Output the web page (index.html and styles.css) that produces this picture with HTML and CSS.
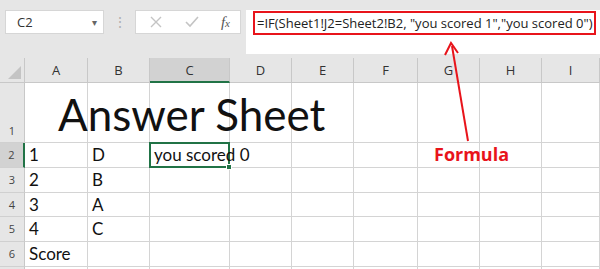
FILE: index.html
```html
<!DOCTYPE html>
<html lang="en">
<head>
  <meta charset="UTF-8" />
  <title>Answer Sheet</title>
  <link rel="stylesheet" href="styles.css">
</head>
<body>

<div class="app">
  <div class="toolbar">
    <div class="namebox">
      <span>C2</span>
      <span class="caret">&#9662;</span>
    </div>
    <div class="grip">&#8942;</div>
    <div class="buttons">
      <svg width="14" height="14" viewBox="0 0 14 14"><path d="M2 2 L12 12 M12 2 L2 12" stroke="#c4c4c4" stroke-width="1.4" fill="none"/></svg>
      <svg width="16" height="14" viewBox="0 0 16 14"><path d="M2 7 L6 11 L14 2" stroke="#c4c4c4" stroke-width="1.6" fill="none"/></svg>
      <span class="fx"><i>f</i><i class="x">x</i></span>
    </div>
    <div class="formulabar">
      <div class="formula">=IF(Sheet1!J2=Sheet2!B2, "you scored 1","you scored 0")</div>
    </div>
  </div>

  <div class="sheet">
    <div class="corner"><span class="tri"></span></div>
    <div class="colhead">A</div>
    <div class="colhead">B</div>
    <div class="colhead active">C</div>
    <div class="colhead">D</div>
    <div class="colhead">E</div>
    <div class="colhead">F</div>
    <div class="colhead">G</div>
    <div class="colhead">H</div>
    <div class="colhead">I</div>

    <div class="rowhead tall">1</div>
    <div class="cell tall title">Answer Sheet</div>
    <div class="cell tall"></div>
    <div class="cell tall"></div>
    <div class="cell tall"></div>
    <div class="cell tall"></div>
    <div class="cell tall"></div>
    <div class="cell tall"></div>
    <div class="cell tall"></div>
    <div class="cell tall"></div>

    <div class="rowhead active">2</div>
    <div class="cell">1</div>
    <div class="cell">D</div>
    <div class="cell selected"><span class="spill">you scored 0</span><span class="handle"></span></div>
    <div class="cell"></div>
    <div class="cell"></div>
    <div class="cell"></div>
    <div class="cell"></div>
    <div class="cell"></div>
    <div class="cell"></div>

    <div class="rowhead">3</div>
    <div class="cell">2</div>
    <div class="cell">B</div>
    <div class="cell"></div>
    <div class="cell"></div>
    <div class="cell"></div>
    <div class="cell"></div>
    <div class="cell"></div>
    <div class="cell"></div>
    <div class="cell"></div>

    <div class="rowhead">4</div>
    <div class="cell">3</div>
    <div class="cell">A</div>
    <div class="cell"></div>
    <div class="cell"></div>
    <div class="cell"></div>
    <div class="cell"></div>
    <div class="cell"></div>
    <div class="cell"></div>
    <div class="cell"></div>

    <div class="rowhead">5</div>
    <div class="cell">4</div>
    <div class="cell">C</div>
    <div class="cell"></div>
    <div class="cell"></div>
    <div class="cell"></div>
    <div class="cell"></div>
    <div class="cell"></div>
    <div class="cell"></div>
    <div class="cell"></div>

    <div class="rowhead">6</div>
    <div class="cell">Score</div>
    <div class="cell"></div>
    <div class="cell"></div>
    <div class="cell"></div>
    <div class="cell"></div>
    <div class="cell"></div>
    <div class="cell"></div>
    <div class="cell"></div>
    <div class="cell"></div>

    <div class="rowhead"></div>
    <div class="cell"></div>
    <div class="cell"></div>
    <div class="cell"></div>
    <div class="cell"></div>
    <div class="cell"></div>
    <div class="cell"></div>
    <div class="cell"></div>
    <div class="cell"></div>
    <div class="cell"></div>
  </div>

  <svg class="arrow" width="600" height="269" viewBox="0 0 600 269">
    <line x1="468" y1="141" x2="452" y2="46" stroke="#e8141b" stroke-width="2"/>
    <path d="M445 55 L451 43 L458 53" stroke="#e8141b" stroke-width="2" fill="none"/>
  </svg>
  <div class="note">Formula</div>
</div>

</body>
</html>
```

FILE: styles.css
```css
* { box-sizing: border-box; }

body {
  margin: 0;
  font-family: Lato, "Open Sans", sans-serif;
  background: #fff;
  overflow: hidden;
}

.app {
  position: relative;
  width: 600px;
  height: 269px;
  overflow: hidden;
}

.toolbar {
  display: flex;
  align-items: flex-start;
  background: #e6e6e6;
  height: 58px;
  padding-top: 10px;
}

.namebox {
  display: flex;
  align-items: center;
  justify-content: space-between;
  width: 99px;
  height: 24px;
  margin-left: 5px;
  padding: 0 6px 0 11px;
  background: #fff;
  border: 1px solid #d6d6d6;
  font-family: "Open Sans", sans-serif;
  font-size: 13px;
  color: #333;
}

.caret {
  font-size: 10px;
  color: #666;
}

.grip {
  width: 31px;
  text-align: center;
  color: #b0b0b0;
  font-size: 14px;
  line-height: 24px;
}

.buttons {
  display: flex;
  align-items: center;
  justify-content: space-between;
  width: 106px;
  height: 24px;
  padding: 0 10px 0 13px;
  background: #fff;
  border: 1px solid #d6d6d6;
}

.fx {
  font-family: "Liberation Serif", serif;
  font-size: 15px;
  color: #555;
}

.fx .x {
  font-size: 11px;
}

.formulabar {
  flex: 1;
  height: 44px;
  margin-left: 5px;
  background: #fff;
  padding: 1px 4px 0 7px;
}

.formula {
  border: 2px solid #e8141b;
  height: 24px;
  padding: 0 0 0 2px;
  font-family: "Open Sans", sans-serif;
  font-size: 13px;
  line-height: 20px;
  color: #222;
  white-space: nowrap;
}

.sheet {
  display: grid;
  grid-template-columns: 25px 63px 62px 80px 62px 62px 64px 62px 62px 58px;
  grid-template-rows: 25px 60px 25px 25px 24px 25px 25px 25px;
}

.corner {
  position: relative;
  background: #e6e6e6;
  border-right: 1px solid #c8c8c8;
  border-bottom: 1px solid #c8c8c8;
}

.tri {
  position: absolute;
  right: 3px;
  bottom: 3px;
  width: 0;
  height: 0;
  border-left: 13px solid transparent;
  border-bottom: 13px solid #c4c4c4;
}

.colhead {
  background: #e6e6e6;
  border-right: 1px solid #c8c8c8;
  border-bottom: 1px solid #c8c8c8;
  text-align: center;
  font-family: "Open Sans", sans-serif;
  font-size: 13px;
  line-height: 24px;
  color: #333;
}

.colhead.active {
  background: #d2d2d2;
  border-bottom: 2px solid #217346;
}

.rowhead {
  background: #e6e6e6;
  border-right: 1px solid #c8c8c8;
  border-bottom: 1px solid #d0d0d0;
  text-align: center;
  font-family: "Open Sans", sans-serif;
  font-size: 11px;
  line-height: 24px;
  color: #444;
}

.rowhead.tall {
  display: flex;
  align-items: flex-end;
  justify-content: center;
  line-height: 22px;
}

.rowhead.active {
  background: #d2d2d2;
  border-right: 2px solid #217346;
}

.cell {
  position: relative;
  border-right: 1px solid #d4d4d4;
  border-bottom: 1px solid #d4d4d4;
  padding-left: 4px;
  font-size: 17px;
  line-height: 24px;
  color: #111;
  white-space: nowrap;
}

.cell.title {
  overflow: visible;
  z-index: 1;
  padding-left: 33px;
  font-size: 44px;
  line-height: 62px;
}

.cell.selected {
  z-index: 1;
  border: 2px solid #217346;
  margin: -1px 0 0 -1px;
  padding-left: 3px;
  line-height: 22px;
}

.spill {
  display: inline-block;
}

.handle {
  position: absolute;
  right: -4px;
  bottom: -4px;
  width: 6px;
  height: 6px;
  background: #217346;
  border: 1px solid #fff;
}

.arrow {
  position: absolute;
  left: 0;
  top: 0;
  pointer-events: none;
}

.note {
  position: absolute;
  left: 434px;
  top: 142px;
  font-family: "Open Sans", sans-serif;
  font-weight: bold;
  font-size: 18px;
  color: #e8141b;
}
```
